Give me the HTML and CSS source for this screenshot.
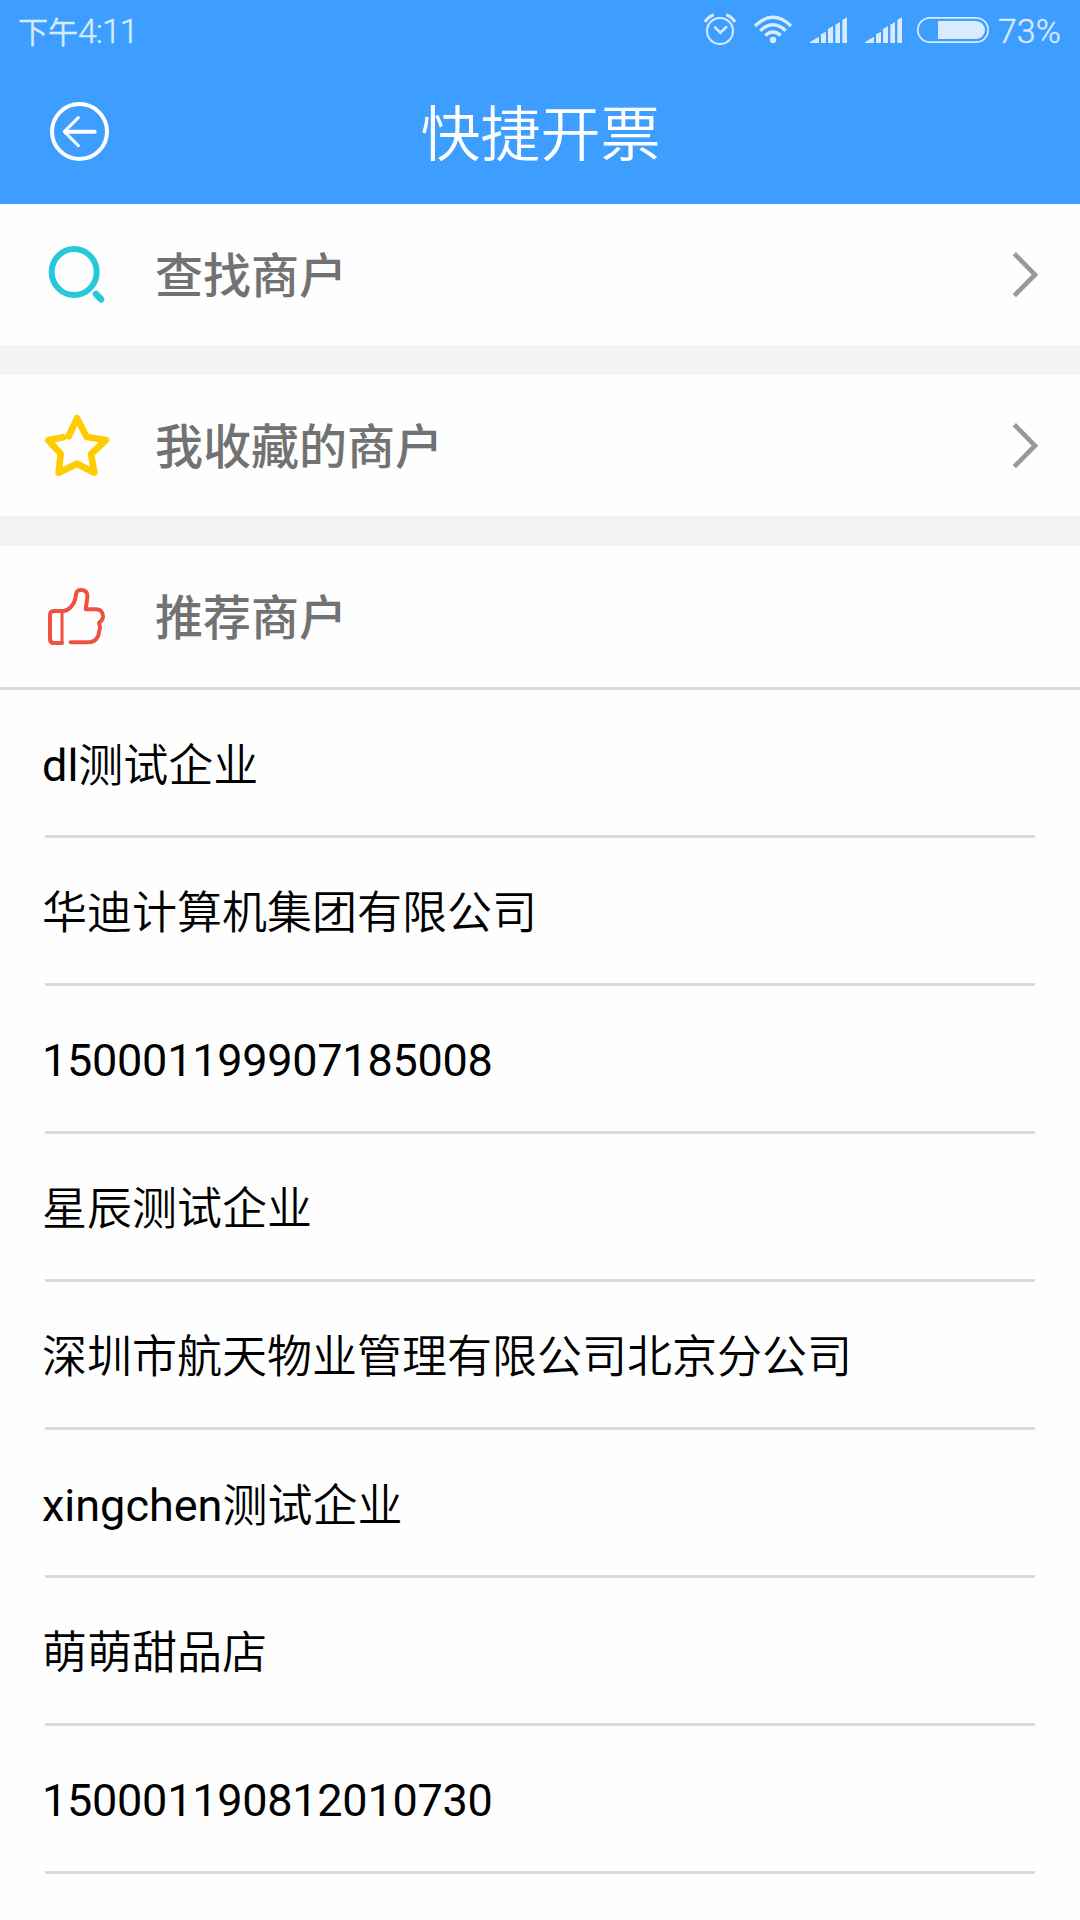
FILE: index.html
```html
<!DOCTYPE html>
<html lang="zh-CN">
<head>
<meta charset="utf-8">
<title>快捷开票</title>
<link rel="stylesheet" href="styles.css">
</head>
<body>
<header class="header">
  <div class="status">
    <span class="status-time">下午<span class="clock">4:11</span></span>
    <div class="status-icons">
      <svg class="alarm" viewBox="39 0 102 192" fill="none" stroke="currentColor"><circle cx="90" cy="93" r="39" stroke-width="6"/><path d="M75 82l16 16 18-17" stroke-width="7.500" stroke-linecap="round"/><path d="M45 66q9-15 26-22M135 66q-9-15-26-22" stroke-width="9"/></svg>
      <svg class="wifi" viewBox="189 0 120 192" fill="none" stroke="currentColor" stroke-width="10"><path d="M195 78Q249 26 303 78M211 92Q249 56 287 92M226 107Q249 85 272 107"/><circle cx="249" cy="120" r="9.500" fill="currentColor" stroke="none"/></svg>
      <svg class="signal" viewBox="357 0 117 192" fill="currentColor"><path d="M360 126l27-16v19h-25q-2 0-2-3zM393 103l15-8v34h-15zM414 87l15-9v51h-15zM436 74l14-8v63h-14zM457 60l14-8v77h-14z"/></svg>
      <svg class="signal" viewBox="357 0 117 192" fill="currentColor"><path d="M360 126l27-16v19h-25q-2 0-2-3zM393 103l15-8v34h-15zM414 87l15-9v51h-15zM436 74l14-8v63h-14zM457 60l14-8v77h-14z"/></svg>
      <svg class="battery" viewBox="678 0 222 192"><rect x="683.500" y="53.500" width="211" height="73" rx="36.500" fill="none" stroke="currentColor" stroke-width="5"/><path d="M744 63h114a27 27 0 0 1 0 54H744z" fill="currentColor"/></svg>
      <span class="percent">73%</span>
    </div>
  </div>
  <div class="navbar">
    <svg class="back" viewBox="147 303 183 198" fill="none" stroke="currentColor" stroke-linecap="round" stroke-linejoin="round"><circle cx="238.500" cy="394.500" r="82.500" stroke-width="12"/><path d="M284 395H196" stroke-width="12"/><path d="M235 353l-42 42 42 42" stroke-width="9"/></svg>
    <h1 class="title">快捷开票</h1>
  </div>
</header>
<main>
  <a class="entry">
    <svg class="icon search" viewBox="129 87 210 213" fill="none" stroke="currentColor"><ellipse cx="222.500" cy="186" rx="67.500" ry="69" stroke-width="18"/><path d="M288 252l15 16" stroke-width="20" stroke-linecap="round"/></svg>
    <span class="label">查找商户</span>
    <svg class="chevron" viewBox="210 87 90 213" fill="none" stroke="currentColor" stroke-width="14"><path d="M223 131l62 63-62 63"/></svg>
  </a>
  <a class="entry">
    <svg class="icon star" viewBox="129 90 210 213" fill="none" stroke="currentColor" stroke-width="20" stroke-linecap="round" stroke-linejoin="round"><path d="M206 169l25-54 29 56 58 9-45 42 10 56-52-27-55 27 6-57-37-40 44-9"/></svg>
    <span class="label">我收藏的商户</span>
    <svg class="chevron" viewBox="210 87 90 213" fill="none" stroke="currentColor" stroke-width="14"><path d="M223 131l62 63-62 63"/></svg>
  </a>
  <section class="entry heading">
    <svg class="icon thumb" viewBox="129 123 210 213" fill="none" stroke="currentColor" stroke-width="12" stroke-linecap="round" stroke-linejoin="round"><path d="M186 213H162q-12 0-12 12v71q0 13 12 13h24"/><path d="M186 213v95" stroke-width="9"/><path d="M188 213c17 1 35-20 38-37 1-16 3-26 17-26 21 0 21 17 18 30l-4 28h30c16 0 23 10 22 23-1 10-5 13-12 17 2 8 5 18 1 24-3 6 0 12-5 18-5 12-16 17-32 17h-49"/></svg>
    <span class="label">推荐商户</span>
  </section>
  <ul class="merchants">
    <li class="mixed"><span class="latin">dl</span>测试企业</li>
    <li class="han">华迪计算机集团有限公司</li>
    <li class="number">150001199907185008</li>
    <li class="han">星辰测试企业</li>
    <li class="han">深圳市航天物业管理有限公司北京分公司</li>
    <li class="mixed"><span class="latin">xingchen</span>测试企业</li>
    <li class="han">萌萌甜品店</li>
    <li class="number">150001190812010730</li>
  </ul>
</main>
</body>
</html>
```
FILE: styles.css
```css
* {
  box-sizing: border-box;
}

body {
  margin: 0;
  min-height: 1920px;
  background: #fefefe;
  color: #000;
  font-family: Roboto, "Noto Sans CJK SC", sans-serif;
}

svg {
  display: block;
  flex: none;
}

.header {
  height: 204px;
  background: #3e9eff;
  color: #fff;
}

.status {
  display: flex;
  justify-content: space-between;
  height: 64px;
  padding: 0 17px 0 18px;
  color: #d8ebff;
  font-size: 30px;
  font-weight: 350;
  line-height: 62px;
  -webkit-text-stroke: 0.4px currentColor;
}

.clock {
  font-size: 34px;
  letter-spacing: -1px;
}

.status-icons {
  display: flex;
}

.status-icons svg {
  height: 64px;
}

.alarm {
  width: 34px;
}

.wifi {
  width: 40px;
  margin-left: 16px;
}

.signal {
  width: 39px;
  margin-left: 16px;
}

.battery {
  width: 74px;
  margin-left: 13px;
}

.percent {
  width: 65px;
  margin-left: 8px;
  font-size: 34px;
  white-space: nowrap;
}

.navbar {
  display: grid;
  grid-template-columns: 61px 1fr 61px;
  align-items: center;
  height: 140px;
  padding: 0 49px;
}

.back {
  width: 61px;
  height: 66px;
}

.title {
  margin: 0;
  padding: 4px 0 0 1px;
  font-size: 60px;
  font-weight: 350;
  line-height: 80px;
  text-align: center;
}

.entry {
  display: flex;
  align-items: center;
  height: 141px;
  margin-bottom: 30px;
  padding: 0 40px 0 43px;
  background: #fefefe;
  box-shadow: 0 30px #f3f3f3;
}

.heading {
  height: 144px;
  margin-bottom: 0;
  border-bottom: 3px solid #d9d9d9;
  box-shadow: none;
}

.icon {
  width: 70px;
  height: 71px;
}

.search {
  color: #27c8d9;
}

.star {
  color: #ffcc00;
}

.thumb {
  color: #ef5140;
}

.label {
  flex: 1;
  margin-left: 42px;
  padding-top: 4px;
  color: #727272;
  font-size: 48px;
  font-weight: 500;
  line-height: 70px;
}

.chevron {
  width: 30px;
  height: 71px;
  color: #999;
}

.merchants {
  margin: 0;
  padding: 0 45px;
  list-style: none;
}

.merchants li {
  height: 148px;
  border-bottom: 3px solid #d9d9d9;
  font-size: 45px;
  font-weight: 350;
  line-height: 149px;
  text-indent: -3px;
  white-space: nowrap;
}

.merchants .han {
  line-height: 152px;
}

.merchants .mixed {
  line-height: 151px;
}

.merchants .number {
  font-weight: 400;
  letter-spacing: -0.26px;
}

.latin {
  font-weight: 400;
  vertical-align: 1px;
}
```
